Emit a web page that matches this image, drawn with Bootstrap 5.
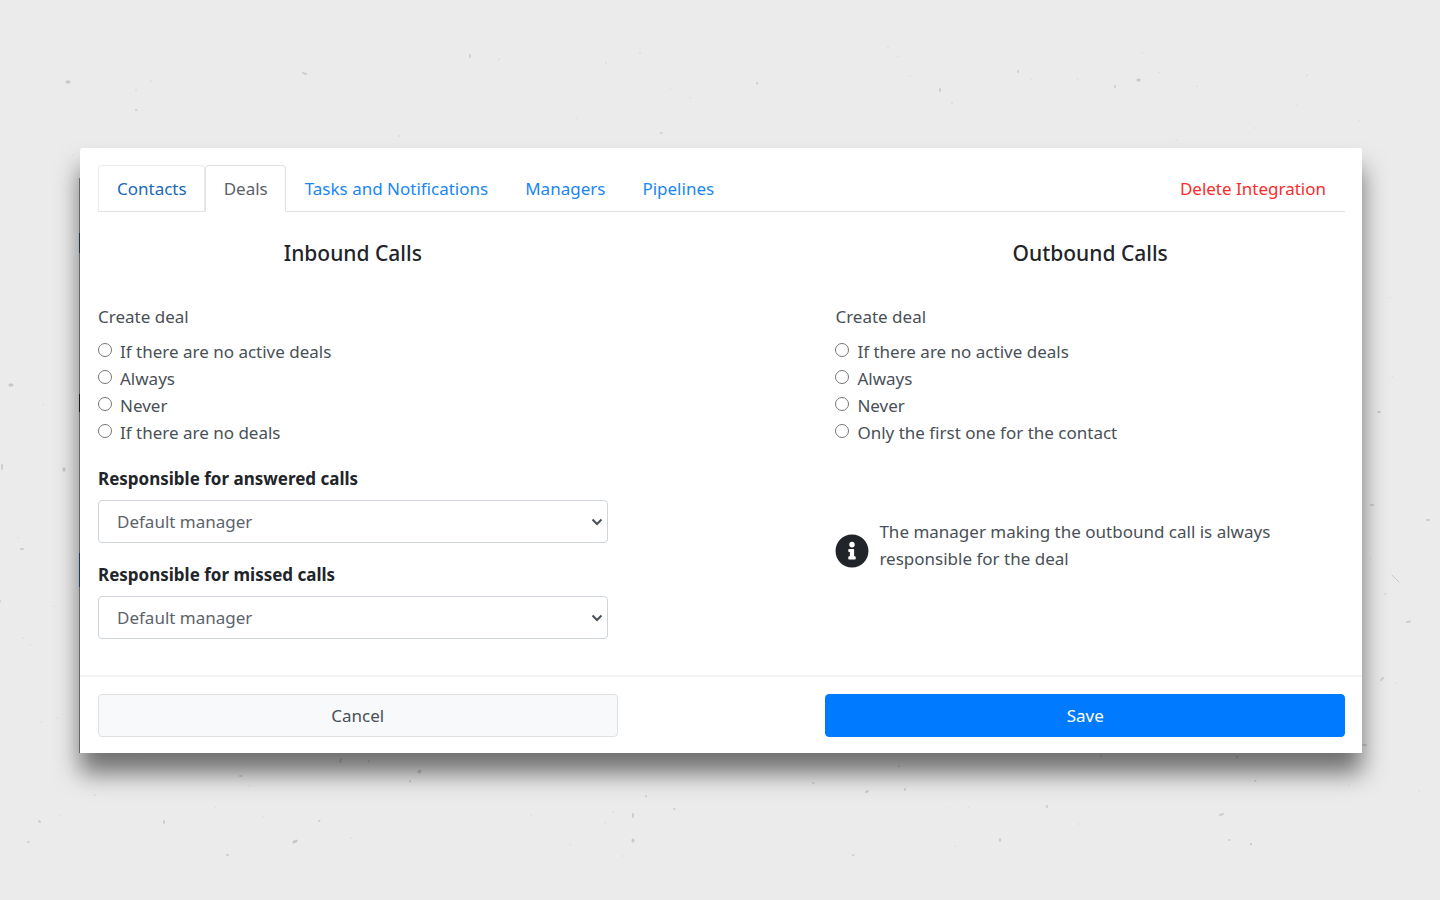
<!DOCTYPE html>
<html lang="en">
<head>
<meta charset="utf-8">
<meta name="viewport" content="width=device-width, initial-scale=1">
<title>Integration settings</title>
<link href="https://cdn.jsdelivr.net/npm/bootstrap@5.3.0/dist/css/bootstrap.min.css" rel="stylesheet">
<style>
  body { background: #ebebeb; color: #495057; font-family: "Noto Sans", sans-serif; font-size: 17px; line-height: 27px; }
  .stage { min-height: 100vh; padding: 148px 78px 100px 80px; overflow: hidden; }
  .specks { z-index: 0; }
  .panel { z-index: 1; background: #fff; border-radius: 3px 2px 0 0; box-shadow: 0 20px 24px rgba(0,0,0,.53); }
  /* worn left edge of the sheet */
  .panel::before { content: ""; position: absolute; left: -1px; top: 30px; bottom: 0; width: 1px;
    background: linear-gradient(#666 55px, #1f3444 55px, #1f3444 75px, #666 75px, #666 216px, #1a1a1a 216px, #1a1a1a 234px, #666 234px, #666 375px, #1f3a5c 375px, #1f3a5c 409px, #666 409px); }
  .panel-main { padding: 17px 17px 36px 18px; }
  .panel-foot { padding: 17px 17px 16px 18px; border-top: 2px solid #f4f4f4; }
  .nav-tabs { --bs-nav-link-padding-x: 18px; --bs-nav-link-padding-y: 9px; --bs-nav-tabs-border-color: #dee2e6; --bs-nav-link-color: #1a86f5; --bs-nav-tabs-link-active-color: #5a6167; --bs-nav-tabs-border-radius: 4px; }
  .nav-tabs .nav-link { padding-right: 17px; }
  .nav-tabs .hovered { color: #1c68b8; border-color: #e9ecef #e9ecef #dee2e6; }
  .nav-tabs .nav-link.remove { color: #fb2c2c; padding-right: 18px; }
  .settings { padding-top: 28px; }
  .settings h2 { font-size: 21px; line-height: 27px; font-weight: 500; color: #212529; margin-bottom: 36px; text-align: center; }
  .col-inbound { padding-right: 10px; }
  .col-outbound { padding-left: 10px; }
  fieldset { margin-bottom: 19px; }
  fieldset legend { font-size: 17px; line-height: 27px; margin-bottom: 8px; }
  .choice { display: flex; gap: 8px; }
  .choice input { width: 14px; height: 14px; margin: 5px 0 0; appearance: none; background: #fff; border: 1px solid #767676; border-radius: 50%; }
  .choice input:checked { background: #007bff; box-shadow: inset 0 0 0 3px #fff; }
  .field { margin-bottom: 18px; }
  .field:last-child { margin-bottom: 0; }
  .field label { display: block; font-weight: 700; color: #212529; margin-bottom: 8px; }
  .field .form-select { height: 43px; padding: 8px 36px 8px 18px; font-size: 17px; line-height: 25px; color: #5c636a; border-color: #ced4da; border-radius: 4px;
    background-image: url("data:image/svg+xml,%3csvg xmlns='http://www.w3.org/2000/svg' viewBox='0 0 12 8'%3e%3cpath d='M1.500 1.500 6 6l4.500-4.500' fill='none' stroke='%23495057' stroke-width='2'/%3e%3c/svg%3e"); background-size: 12px 8px; background-position: right 4px center; }
  .note { margin-top: 72px; gap: 10px; }
  .note svg { width: 34px; height: 34px; margin-top: 16px; }
  .panel-foot .btn { height: 43px; padding: 7px 18px; font-size: 17px; line-height: 27px; border-radius: 4px; }
  .btn-cancel { background: #f8f9fa; border-color: #dfe1e3; color: #495057; }
  .btn-save { background: #007bff; border-color: #007bff; color: #fff; }
</style>
</head>
<body>
<div class="stage position-relative">
  <svg class="specks position-absolute top-0 start-0 w-100 h-100" viewBox="0 0 1440 900" preserveAspectRatio="xMidYMid slice" aria-hidden="true" fill="none" stroke-linecap="round">
    <path stroke="#c6c9c8" stroke-width="3" d="M67 82h2M1138 80h1M10 385h2M64 469v1M419 772l1-1M294 842l2-1M633 840v1"/>
    <path stroke="#cdcfce" stroke-width="2" d="M303 73l3 1M470 55v2M757 83v.5M1018 71v1M1115 86v1M940 89v2M2 465v4M21 549h2M0 601v.5M39 821l1 1M28 842h.5M1378 412h2M1371 505h2M1427 520h2M1407 622l3-.5M1381 680l2-2M1363 745h3M340 762l1-3M369 761v.5M410 781v.5M240 776h1M164 821v2M319 821h.5M227 855h1M633 814v3M646 796v.5M813 783h.5M866 792l2-1M905 789v1M899 766v.5M1101 756v.5M1237 757v.5M1255 781h.5M1047 806v1M1220 815l3-1M1000 839v2M1229 840h.5M1251 844v.5M853 855h.5M674 809h.5M136 110h.5M661 133h.5"/>
    <path stroke="#c8cac9" stroke-width="1" d="M1392 575l7 7M95 795v.5M136 90v.5M151 81v.5M499 59v.5M606 63h.5M640 53v.5M399 136h.5M1307 75v.5M952 103v.5M1384 594h2"/>
    <path stroke="#d3d5d4" stroke-width="1" d="M670 89v.5M690 98h.5M576 118h.5M888 47v.5M898 56v.5M910 76v.5M1031 79h.5M1077 79h1M1142 53h.5M1159 72v.5M1197 86v.5M1297 105v.5M1254 128h.5M1359 121h.5M1176 140h.5M43 405h.5M18 538h.5M54 606h.5M23 638h.5M30 645h.5M57 718h.5M41 722h.5M60 815h.5M1390 298h.5M1392 377h.5M1396 683h.5M1370 559h.5M1419 791h.5M1349 785h.5M136 759h.5M249 786h.5M215 807h.5M351 838h.5M605 823h.5M613 812h.5M531 815h.5M570 845h.5M623 856h.5M263 817h.5M947 808h.5M1079 824h.5M968 807h.5M955 846h.5M1266 832h.5M73 155h.5"/>
  </svg>

  <main class="panel position-relative">
    <form>
      <div class="panel-main">
        <ul class="nav nav-tabs">
          <li class="nav-item"><a class="nav-link hovered" href="#">Contacts</a></li>
          <li class="nav-item"><a class="nav-link active" aria-current="page" href="#">Deals</a></li>
          <li class="nav-item"><a class="nav-link" href="#">Tasks and Notifications</a></li>
          <li class="nav-item"><a class="nav-link" href="#">Managers</a></li>
          <li class="nav-item"><a class="nav-link" href="#">Pipelines</a></li>
          <li class="nav-item ms-auto"><a class="nav-link remove" href="#">Delete Integration</a></li>
        </ul>

        <div class="settings row g-0 justify-content-between">
          <section class="col-5 col-inbound">
            <h2>Inbound Calls</h2>
            <fieldset>
              <legend>Create deal</legend>
              <div class="choice"><input type="radio" name="inbound" id="in1"><label for="in1">If there are no active deals</label></div>
              <div class="choice"><input type="radio" name="inbound" id="in2"><label for="in2">Always</label></div>
              <div class="choice"><input type="radio" name="inbound" id="in3"><label for="in3">Never</label></div>
              <div class="choice"><input type="radio" name="inbound" id="in4"><label for="in4">If there are no deals</label></div>
            </fieldset>
            <div class="field">
              <label for="answered">Responsible for answered calls</label>
              <select class="form-select" id="answered"><option>Default manager</option></select>
            </div>
            <div class="field">
              <label for="missed">Responsible for missed calls</label>
              <select class="form-select" id="missed"><option>Default manager</option></select>
            </div>
          </section>

          <section class="col-5 col-outbound">
            <h2>Outbound Calls</h2>
            <fieldset>
              <legend>Create deal</legend>
              <div class="choice"><input type="radio" name="outbound" id="out1"><label for="out1">If there are no active deals</label></div>
              <div class="choice"><input type="radio" name="outbound" id="out2"><label for="out2">Always</label></div>
              <div class="choice"><input type="radio" name="outbound" id="out3"><label for="out3">Never</label></div>
              <div class="choice"><input type="radio" name="outbound" id="out4"><label for="out4">Only the first one for the contact</label></div>
            </fieldset>
            <div class="note d-flex align-items-start">
              <svg class="flex-shrink-0" viewBox="0 0 512 512" aria-hidden="true"><path fill="#212529" d="M256 8C119 8 8 119 8 256s111 248 248 248 248-111 248-248S393 8 256 8zm0 110c23.200 0 42 18.800 42 42s-18.800 42-42 42-42-18.800-42-42 18.800-42 42-42zm56 254c0 6.600-5.400 12-12 12h-88c-6.600 0-12-5.400-12-12v-24c0-6.600 5.400-12 12-12h12v-64h-12c-6.600 0-12-5.400-12-12v-24c0-6.600 5.400-12 12-12h64c6.600 0 12 5.400 12 12v100h12c6.600 0 12 5.400 12 12v24z"/></svg>
              <p class="note-text mb-0">The manager making the outbound call is always responsible for the deal</p>
            </div>
          </section>
        </div>
      </div>

      <div class="panel-foot">
        <div class="row g-0 justify-content-between">
          <div class="col-5"><button type="button" class="btn btn-cancel w-100">Cancel</button></div>
          <div class="col-5"><button type="submit" class="btn btn-save w-100">Save</button></div>
        </div>
      </div>
    </form>
  </main>
</div>
<script src="https://cdn.jsdelivr.net/npm/bootstrap@5.3.0/dist/js/bootstrap.bundle.min.js"></script>
</body>
</html>
